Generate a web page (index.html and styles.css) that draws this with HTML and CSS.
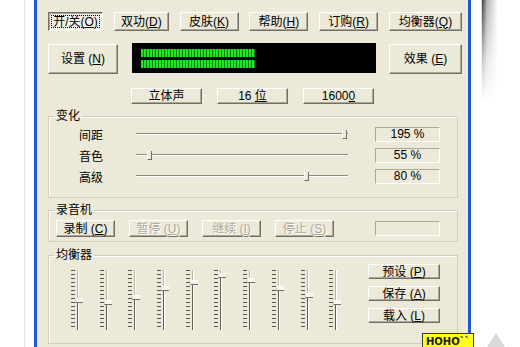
FILE: index.html
```html
<!DOCTYPE html>
<html lang="zh-CN">
<head>
    <meta charset="UTF-8">
    <meta name="viewport" content="width=device-width, initial-scale=1.0">
    <title>变声器</title>
    <link rel="stylesheet" href="styles.css">
</head>
<body>
    <div class="desk">
        <div class="desk-rule"></div>
        <div class="window">
            <div class="client">
                <div class="toolbar">
                    <button class="btn btn-on">开/关(<u>O</u>)</button>
                    <button class="btn">双功(<u>D</u>)</button>
                    <button class="btn">皮肤(<u>K</u>)</button>
                    <button class="btn">帮助(<u>H</u>)</button>
                    <button class="btn">订购(<u>R</u>)</button>
                    <button class="btn">均衡器(<u>Q</u>)</button>
                </div>

                <div class="main-row">
                    <button class="btn btn-big btn-setup">设置 (<u>N</u>)</button>
                    <div class="meter">
                        <div class="meter-bar"></div>
                        <div class="meter-bar"></div>
                    </div>
                    <button class="btn btn-big btn-effect">效果 (<u>E</u>)</button>
                </div>

                <div class="format-row">
                    <button class="btn btn-format">立体声</button>
                    <button class="btn btn-format">16 <u>位</u></button>
                    <button class="btn btn-format">1600<u>0</u></button>
                </div>

                <fieldset class="group">
                    <legend>变化</legend>
                    <div class="vary-body">
                        <div class="vary-row">
                            <span class="vary-label">间距</span>
                            <div class="hslider"><span class="hthumb" style="left: 206px"></span></div>
                            <div class="readout">195 %</div>
                        </div>
                        <div class="vary-row">
                            <span class="vary-label">音色</span>
                            <div class="hslider"><span class="hthumb" style="left: 11px"></span></div>
                            <div class="readout">55 %</div>
                        </div>
                        <div class="vary-row">
                            <span class="vary-label">高级</span>
                            <div class="hslider"><span class="hthumb" style="left: 168px"></span></div>
                            <div class="readout">80 %</div>
                        </div>
                    </div>
                </fieldset>

                <fieldset class="group group-rec">
                    <legend>录音机</legend>
                    <div class="rec-body">
                        <button class="btn btn-rec">录制 (<u>C</u>)</button>
                        <button class="btn btn-rec" disabled>暂停 (<u>U</u>)</button>
                        <button class="btn btn-rec" disabled>继续 (<u>I</u>)</button>
                        <button class="btn btn-rec" disabled>停止 (<u>S</u>)</button>
                        <div class="rec-time"></div>
                    </div>
                </fieldset>

                <fieldset class="group group-eq">
                    <legend>均衡器</legend>
                    <div class="eq-body">
                        <div class="eq-sliders">
                            <div class="vslider"><span class="vthumb" style="top: 28px"></span></div>
                            <div class="vslider"><span class="vthumb" style="top: 30px"></span></div>
                            <div class="vslider"><span class="vthumb" style="top: 25px"></span></div>
                            <div class="vslider"><span class="vthumb" style="top: 16px"></span></div>
                            <div class="vslider"><span class="vthumb" style="top: 10px"></span></div>
                            <div class="vslider"><span class="vthumb" style="top: 3px"></span></div>
                            <div class="vslider"><span class="vthumb" style="top: 8px"></span></div>
                            <div class="vslider"><span class="vthumb" style="top: 16px"></span></div>
                            <div class="vslider"><span class="vthumb" style="top: 23px"></span></div>
                            <div class="vslider"><span class="vthumb" style="top: 30px"></span></div>
                        </div>
                        <div class="eq-buttons">
                            <button class="btn btn-eq">预设 (<u>P</u>)</button>
                            <button class="btn btn-eq">保存 (<u>A</u>)</button>
                            <button class="btn btn-eq">载入 (<u>L</u>)</button>
                        </div>
                    </div>
                </fieldset>
            </div>
            <div class="badge">HOHO``</div>
        </div>
        <div class="edge"></div>
        <div class="corner"></div>
    </div>
</body>
</html>
```

FILE: styles.css
```css
:root {
    --face: #ECE9D8;
    --shade: #716F64;
    --soft-shade: #ACA899;
    --frame: #D0CEBF;
    --xp-blue: #2156D9;
}

body {
    margin: 0;
    background: #FFFFFF;
    font-family: "Liberation Sans", "Noto Sans CJK SC", sans-serif;
    font-size: 12px;
    color: #000;
    overflow: hidden;
}

.desk {
    display: flex;
    height: 347px;
    padding-left: 24px;
    position: relative;
}

.desk-rule {
    width: 1px;
    background: #E4E4E4;
    margin-right: 9px;
}

.window {
    width: 431px;
    border-left: 3px solid var(--xp-blue);
    border-right: 3px solid var(--xp-blue);
    background: var(--face);
    position: relative;
}

.client {
    padding: 12px 6px 0 11px;
}

.edge {
    margin-left: 10px;
    width: 24px;
    border-left: 1px solid #D8D8D8;
    background: linear-gradient(to right, #3A3A3A, #B5B5B5 5px, #FFFFFF 16px);
    -webkit-mask-image: linear-gradient(to bottom, #000 0, rgba(0, 0, 0, 0.3) 60px, transparent 100px);
}

.corner {
    position: absolute;
    left: 487px;
    top: 333px;
    width: 0;
    height: 0;
    border-left: 9px solid transparent;
    border-right: 9px solid transparent;
    border-bottom: 14px solid #D9D9D9;
}

/* buttons */

.btn {
    font: inherit;
    color: #000;
    background: var(--face);
    border: 1px solid;
    border-color: #FFFFFF var(--shade) var(--shade) #FFFFFF;
    box-shadow: inset -1px -1px var(--soft-shade);
    padding: 0;
    line-height: 1;
    white-space: nowrap;
    cursor: pointer;
}

.btn u {
    text-decoration: underline;
    text-underline-offset: 1px;
}

.btn:disabled {
    color: var(--soft-shade);
    text-shadow: 1px 1px #FFFFFF;
    cursor: default;
}

.btn-on {
    background: #F4F2E8;
    border-color: var(--shade) #FFFFFF #FFFFFF var(--shade);
    box-shadow: inset 1px 1px var(--soft-shade);
    outline: 1px dotted #000;
    outline-offset: -4px;
}

.toolbar {
    display: grid;
    grid-template-columns: 55px 55px 59px 59px 59px 73px;
    justify-content: space-between;
    height: 19px;
}

.main-row {
    display: flex;
    justify-content: space-between;
    align-items: flex-start;
    margin-top: 12px;
    height: 31px;
}

.btn-big {
    height: 30px;
    margin-top: 1px;
}

.btn-setup {
    width: 70px;
}

.btn-effect {
    width: 73px;
}

.meter {
    width: 244px;
    height: 30px;
    background: #000;
    box-sizing: border-box;
    padding: 6px 0 0 9px;
}

.meter-bar {
    width: 114px;
    height: 8px;
    margin-bottom: 3px;
    background: repeating-linear-gradient(to right, #22E622 0 2px, #0B7A0B 2px 3px);
}

.format-row {
    display: flex;
    gap: 15px;
    margin: 14px 0 0 83px;
}

.btn-format {
    width: 71px;
    height: 16px;
}

/* group boxes */

.group {
    margin: 6px 4px 0 0;
    padding: 0;
    border: 1px solid var(--frame);
    box-shadow: inset 1px 1px #FFFFFF;
    min-inline-size: 0;
}

.group legend {
    margin-left: 5px;
    padding: 0 2px;
    line-height: 12px;
}

.vary-body {
    display: flex;
    flex-direction: column;
    gap: 6px;
    padding: 5px 0 13px 30px;
}

.vary-row {
    display: flex;
    align-items: center;
    height: 15px;
}

.vary-label {
    width: 57px;
}

.hslider {
    width: 212px;
    height: 15px;
    position: relative;
}

.hslider::before {
    content: "";
    position: absolute;
    left: 0;
    right: 0;
    top: 6px;
    height: 1px;
    background: #8F8C80;
    border-bottom: 1px solid #FFFFFF;
}

.hthumb {
    position: absolute;
    top: 3px;
    width: 3px;
    height: 8px;
    background: var(--face);
    border-left: 1px solid #FFFFFF;
    border-right: 1px solid var(--shade);
    border-bottom: 1px solid var(--shade);
}

.readout {
    margin-left: 27px;
    width: 65px;
    height: 15px;
    box-sizing: border-box;
    border: 1px solid;
    border-color: var(--soft-shade) #FFFFFF #FFFFFF var(--soft-shade);
    text-align: center;
    line-height: 13px;
}

.group-rec {
    margin-top: 6px;
}

.rec-body {
    display: flex;
    align-items: center;
    gap: 14px;
    padding: 4px 0 4px 7px;
}

.btn-rec {
    width: 59px;
    height: 17px;
}

.rec-time {
    margin-left: 27px;
    width: 65px;
    height: 15px;
    box-sizing: border-box;
    border: 1px solid;
    border-color: var(--soft-shade) #FFFFFF #FFFFFF var(--soft-shade);
}

.group-eq {
    margin-top: 7px;
}

.eq-body {
    display: flex;
    align-items: flex-start;
    height: 82px;
    box-sizing: border-box;
    padding: 0 17px 0 22px;
}

.eq-sliders {
    display: grid;
    grid-template-columns: repeat(10, 28.7px);
    margin-top: 9px;
}

.vslider {
    position: relative;
    height: 60px;
    width: 12px;
    overflow: hidden;
}

.vslider::before {
    content: "";
    position: absolute;
    left: 0;
    top: 0;
    width: 4px;
    height: 60px;
    background: repeating-linear-gradient(to bottom, #555 0 1px, transparent 1px 4px);
}

.vslider::after {
    content: "";
    position: absolute;
    left: 6px;
    top: 0;
    width: 1px;
    height: 60px;
    background: #B9B6A8;
    border-right: 1px solid #FFFFFF;
}

.vthumb {
    position: absolute;
    left: 4px;
    width: 7px;
    height: 3px;
    background: #F7F6F0;
    border: 1px solid;
    border-color: #FFFFFF var(--shade) var(--shade) #DAD7C9;
    z-index: 1;
}

.vthumb::after {
    content: "";
    position: absolute;
    left: 1px;
    top: 4px;
    width: 1px;
    height: 60px;
    background: #5F5D55;
}

.eq-buttons {
    display: flex;
    flex-direction: column;
    gap: 7px;
    margin: 3px 0 0 auto;
}

.btn-eq {
    width: 72px;
    height: 15px;
}

.badge {
    position: absolute;
    left: 385px;
    top: 333px;
    padding: 1px 3px 0 3px;
    height: 16px;
    box-sizing: border-box;
    background: #FFFF1A;
    border: 1px solid #3A3A3A;
    font-family: "DejaVu Sans", sans-serif;
    font-weight: bold;
    font-size: 10px;
    line-height: 13px;
    color: #1A1A1A;
}
```
